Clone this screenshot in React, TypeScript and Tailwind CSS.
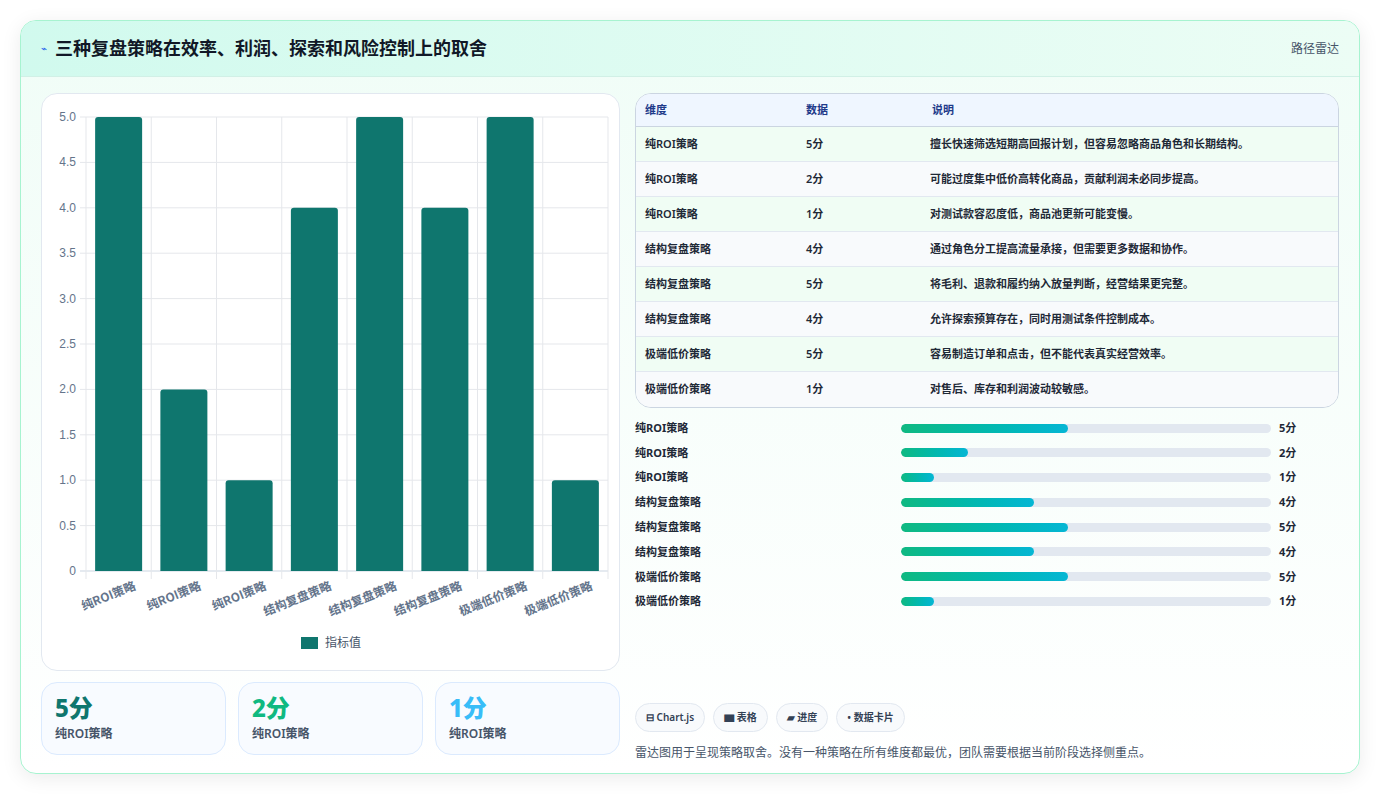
import React from "react";

const rows = [
  ["纯ROI策略", 5, "擅长快速筛选短期高回报计划，但容易忽略商品角色和长期结构。"],
  ["纯ROI策略", 2, "可能过度集中低价高转化商品，贡献利润未必同步提高。"],
  ["纯ROI策略", 1, "对测试款容忍度低，商品池更新可能变慢。"],
  ["结构复盘策略", 4, "通过角色分工提高流量承接，但需要更多数据和协作。"],
  ["结构复盘策略", 5, "将毛利、退款和履约纳入放量判断，经营结果更完整。"],
  ["结构复盘策略", 4, "允许探索预算存在，同时用测试条件控制成本。"],
  ["极端低价策略", 5, "容易制造订单和点击，但不能代表真实经营效率。"],
  ["极端低价策略", 1, "对售后、库存和利润波动较敏感。"],
] as const;

function Chart() {
  const x0 = 44, x1 = 566, y0 = 23, y1 = 477;
  const cw = (x1 - x0) / 8;
  const ticks = [0, 0.5, 1, 1.5, 2, 2.5, 3, 3.5, 4, 4.5, 5];
  return (
    <svg width="579" height="577" viewBox="0 0 579 577" className="block">
      {ticks.map((t) => {
        const y = y1 - (t / 5) * (y1 - y0);
        return (
          <g key={t}>
            <line x1={x0 - 6} x2={x1} y1={y} y2={y} stroke={t === 0 ? "#cbd5e1" : "#e5e7eb"} />
            <text x={x0 - 10} y={y + 4} textAnchor="end" fontSize="12" fill="#64748b" fontFamily="Liberation Sans, sans-serif">
              {t === 0 ? "0" : t.toFixed(1)}
            </text>
          </g>
        );
      })}
      {Array.from({ length: 9 }).map((_, i) => (
        <line key={i} x1={x0 + i * cw} x2={x0 + i * cw} y1={y0} y2={y1 + 8} stroke="#e5e7eb" />
      ))}
      {rows.map((r, i) => {
        const h = (r[1] / 5) * (y1 - y0);
        const cx = x0 + i * cw + cw / 2;
        return (
          <g key={i}>
            <path d={`M${cx - 23.5} ${y1} V${y1 - h + 3} Q${cx - 23.5} ${y1 - h} ${cx - 20.5} ${y1 - h} H${cx + 20.5} Q${cx + 23.5} ${y1 - h} ${cx + 23.5} ${y1 - h + 3} V${y1} Z`} fill="#0f766e" />
            <text transform={`translate(${cx + 18} ${y1 + 18}) rotate(-22)`} textAnchor="end" fontSize="12" fontWeight="bold" fill="#64748b" fontFamily="Noto Sans CJK SC, sans-serif">
              {r[0]}
            </text>
          </g>
        );
      })}
      <rect x="259" y="543" width="17" height="12" fill="#0f766e" />
      <text x="283" y="553" fontSize="12" fill="#475569" fontFamily="Noto Sans CJK SC, sans-serif">指标值</text>
    </svg>
  );
}

export default function App() {
  const f = { fontFamily: '"Noto Sans", "Noto Sans CJK SC", sans-serif' };
  return (
    <div className="w-[1381px] h-[794px] bg-white p-5 pr-[21px]" style={f}>
      <div className="h-[754px] rounded-2xl border border-[#a7f3d0] bg-gradient-to-b from-[#f0fdf7] to-white shadow-[0_4px_20px_rgba(0,0,0,0.08)] overflow-hidden flex flex-col">
        <div className="h-[56px] shrink-0 flex items-center justify-between px-5 bg-gradient-to-r from-[#d1faee] to-[#ecfdf5] border-b border-[#d1f0e6]">
          <div className="flex items-center gap-2">
            <span className="text-[10px] text-[#2563eb]">⌁</span>
            <span className="text-[18px] font-bold text-[#111827]">三种复盘策略在效率、利润、探索和风险控制上的取舍</span>
          </div>
          <span className="text-[12px] text-[#475569]">路径雷达</span>
        </div>
        <div className="flex gap-[15px] px-5 pt-4">
          <div className="w-[579px] flex flex-col gap-[11px]">
            <div className="h-[578px] rounded-2xl border border-[#e2e8f0] bg-white"><Chart /></div>
            <div className="grid grid-cols-3 gap-3">
              {[["5分", "text-[#0f766e]"], ["2分", "text-[#10b981]"], ["1分", "text-[#38bdf8]"]].map(([v, c]) => (
                <div key={v} className="h-[73px] rounded-2xl border border-[#dbeafe] bg-[#f8fbff] px-[13px] pt-[10px]">
                  <div className={`text-[24px] leading-[30px] font-extrabold ${c}`}>{v}</div>
                  <div className="text-[12px] text-[#475569] font-semibold mt-0.5">纯ROI策略</div>
                </div>
              ))}
            </div>
          </div>
          <div className="flex-1 flex flex-col">
            <div className="rounded-2xl border border-[#cbd5e1] overflow-hidden bg-white">
              <div className="h-[33px] flex items-center bg-[#eff6ff] border-b border-[#cbd5e1] text-[11px] font-semibold text-[#1e3a8a]">
                <div className="w-[170px] pl-[9px]">维度</div><div className="w-[126px]">数据</div><div>说明</div>
              </div>
              {rows.map((r, i) => (
                <div key={i} className={`h-[35px] flex items-center text-[11px] font-semibold text-[#1f2937] ${i < 7 ? "border-b border-[#e2e8f0]" : ""} ${i % 2 ? "bg-[#f8fafc]" : "bg-[#f0fdf4]"}`}>
                  <div className="w-[170px] pl-[9px]">{r[0]}</div><div className="w-[124px]">{r[1]}分</div><div>{r[2]}</div>
                </div>
              ))}
            </div>
            <div className="mt-[11px] flex flex-col gap-[6.8px]">
              {rows.map((r, i) => (
                <div key={i} className="h-[18px] flex items-center text-[11px] font-bold text-[#1f2937]">
                  <div className="w-[266px]">{r[0]}</div>
                  <div className="w-[370px] h-[9px] rounded-full bg-[#e2e8f0] overflow-hidden">
                    <div className="h-full rounded-full bg-gradient-to-r from-[#10b981] to-[#06b6d4]" style={{ width: `${r[1] * 9}%` }} />
                  </div>
                  <div className="ml-2">{r[1]}分</div>
                </div>
              ))}
            </div>
            <div className="mt-[92px] flex gap-[8px]">
              {["⊟ Chart.js", "▆ 表格", "▰ 进度", "• 数据卡片"].map((t) => (
                <div key={t} className="h-[29px] px-[10px] flex items-center rounded-full border border-[#e2e8f0] bg-[#f8fafc] text-[10px] font-semibold text-[#334155]">{t}</div>
              ))}
            </div>
            <div className="mt-[12px] text-[12px] text-[#475569]">雷达图用于呈现策略取舍。没有一种策略在所有维度都最优，团队需要根据当前阶段选择侧重点。</div>
          </div>
        </div>
      </div>
    </div>
  );
}
